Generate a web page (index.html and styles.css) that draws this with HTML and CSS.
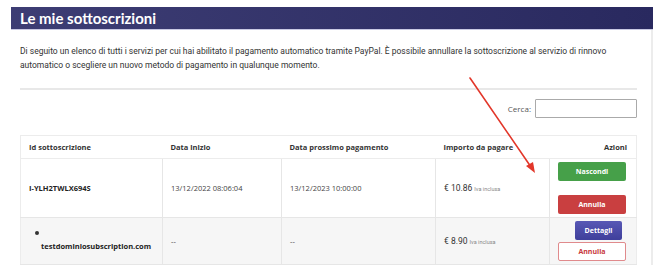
FILE: index.html
```html
<!DOCTYPE html>
<html lang="it">
<head>
    <meta charset="UTF-8">
    <meta name="viewport" content="width=device-width, initial-scale=1.0">
    <title>Le mie sottoscrizioni</title>
    <link rel="stylesheet" href="styles.css">
</head>
<body>
    <div class="page">
        <h1 class="title-bar">Le mie sottoscrizioni</h1>
        <div class="card">
            <p class="intro">Di seguito un elenco di tutti i servizi per cui hai abilitato il pagamento automatico tramite PayPal. È possibile annullare la sottoscrizione al servizio di rinnovo automatico o scegliere un nuovo metodo di pagamento in qualunque momento.</p>
            <hr class="divider">
            <div class="search">
                <label for="cerca">Cerca:</label>
                <input type="search" id="cerca">
            </div>
            <table class="subs">
                <colgroup>
                    <col class="c-id">
                    <col class="c-start">
                    <col class="c-next">
                    <col class="c-amount">
                    <col class="c-actions">
                </colgroup>
                <thead>
                    <tr>
                        <th>Id sottoscrizione</th>
                        <th>Data inizio</th>
                        <th>Data prossimo pagamento</th>
                        <th>Importo da pagare</th>
                        <th class="right">Azioni</th>
                    </tr>
                </thead>
                <tbody>
                    <tr class="row-main">
                        <td class="strong">I-YLH2TWLX694S</td>
                        <td>13/12/2022 08:06:04</td>
                        <td>13/12/2023 10:00:00</td>
                        <td class="amount">€ 10.86 <small>Iva inclusa</small></td>
                        <td class="actions">
                            <div class="btns spread">
                                <button class="btn green">Nascondi</button>
                                <button class="btn red">Annulla</button>
                            </div>
                        </td>
                    </tr>
                    <tr class="row-sub">
                        <td class="strong">
                            <span class="dot"></span>
                            <span class="domain">testdominiosubscription.com</span>
                        </td>
                        <td>--</td>
                        <td>--</td>
                        <td class="amount">€ 8.90 <small>Iva inclusa</small></td>
                        <td class="actions">
                            <div class="btns">
                                <button class="btn indigo">Dettagli</button>
                                <button class="btn outline">Annulla</button>
                            </div>
                        </td>
                    </tr>
                </tbody>
            </table>
        </div>
    </div>

    <!-- freccia di annotazione sopra la tabella -->
    <svg class="arrow" width="666" height="278" viewBox="0 0 666 278">
        <line x1="470" y1="78" x2="531" y2="167" stroke="#e2372a" stroke-width="1.6" stroke-linecap="round"/>
        <polygon points="535,173 526,166 533,162" fill="#e2372a"/>
    </svg>
</body>
</html>
```

FILE: styles.css
```css
body {
    margin: 0;
    background-color: #fff;
    font-family: 'Open Sans', sans-serif;
    color: #333;
}
.page {
    margin: 7px 0 0 11px;
    width: 642px;
}
.title-bar {
    margin: 0;
    height: 22px;
    line-height: 22px;
    padding-left: 9px;
    font-family: Lato, sans-serif;
    font-weight: 700;
    font-size: 15px;
    color: #fff;
    background: linear-gradient(to right, #3d3d74, #29295f);
    border-bottom: 1px solid #c9c9e3;
}
.card {
    border-right: 2px solid #ececec;
    padding: 0 14px 0 9px;
}
.intro {
    margin: 0;
    padding-top: 14px;
    font-family: Roboto, sans-serif;
    font-size: 8.5px;
    line-height: 14px;
    color: #333;
}
.divider {
    margin: 16px 0 0;
    border: none;
    border-top: 2px solid #e8e8e8;
}
.search {
    display: flex;
    justify-content: flex-end;
    align-items: center;
    gap: 4px;
    margin-top: 9px;
}
.search label {
    font-size: 8px;
    color: #555;
}
.search input {
    box-sizing: border-box;
    width: 102px;
    height: 19px;
    border: 1px solid #aaa;
    border-radius: 1px;
    margin: 0;
}
.subs {
    margin-top: 17px;
    width: 616px;
    border-collapse: collapse;
    table-layout: fixed;
    border: 1px solid #ececec;
    font-size: 7.5px;
    color: #444;
}
.c-id { width: 142px; }
.c-start { width: 119px; }
.c-next { width: 154px; }
.c-amount { width: 114px; }
.c-actions { width: 87px; }
.subs th {
    height: 22px;
    padding: 0 8px;
    text-align: left;
    font-weight: 700;
    color: #333;
    border-bottom: 1px solid #ececec;
}
.subs th.right {
    text-align: right;
    padding-right: 9px;
}
.subs td {
    padding: 0 8px;
    vertical-align: middle;
    border-left: 1px solid #e6e6e6;
    border-bottom: 1px solid #e6e6e6;
}
.subs td:first-child {
    border-left: none;
}
.row-sub { background-color: #f6f6f6; }
.strong {
    font-weight: 700;
    color: #222;
}
.dot {
    display: block;
    width: 4px;
    height: 4px;
    margin: 0 0 6px 6px;
    border-radius: 50%;
    background-color: #333;
}
.domain {
    display: block;
    padding-left: 12px;
}
.amount {
    font-family: Roboto, sans-serif;
    font-size: 8.5px;
    color: #333;
}
.amount small {
    font-size: 5.5px;
    color: #888;
}
.subs td.actions {
    padding: 3px 10px 3px 9px;
}
.btns {
    display: flex;
    flex-direction: column;
    align-items: flex-end;
    gap: 2px;
}
.btns.spread { gap: 14px; }
.btn {
    box-sizing: border-box;
    width: 68px;
    height: 19px;
    border: none;
    border-radius: 2px;
    font-family: 'Open Sans', sans-serif;
    font-weight: 700;
    font-size: 7px;
    color: #fff;
    cursor: pointer;
    padding: 0;
}
.green { background-color: #46a049; }
.red { background-color: #c93f40; }
.indigo {
    width: 47px;
    margin-right: 4px;
    background: linear-gradient(to bottom, #5858b5, #3f3f9b);
}
.outline {
    background-color: #fff;
    border: 1px solid #e08a8c;
    color: #c7383c;
}
.arrow {
    position: absolute;
    top: 0;
    left: 0;
    pointer-events: none;
}
```
